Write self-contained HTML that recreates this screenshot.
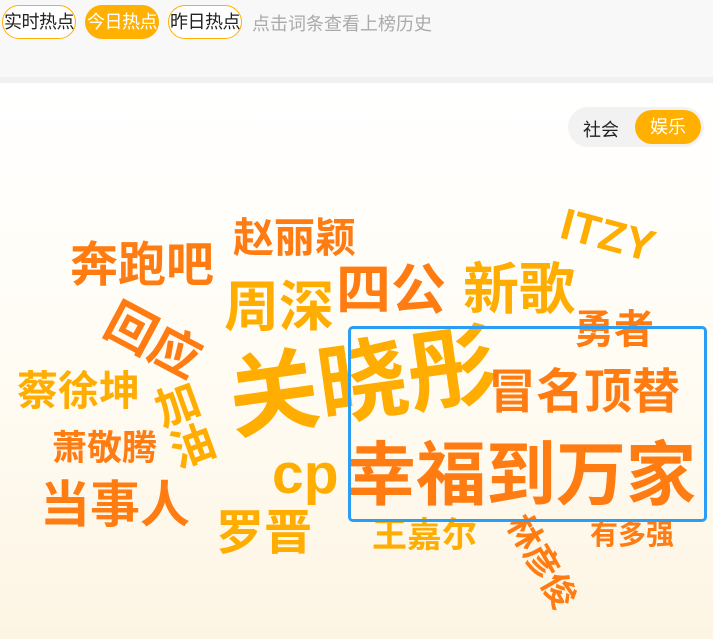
<!DOCTYPE html>
<html><head><meta charset="utf-8"><style>
*{margin:0;padding:0;box-sizing:border-box}
body{width:713px;height:639px;overflow:hidden;font-family:"Liberation Sans","Noto Sans CJK SC",sans-serif;background:#fff;position:relative}
.top{position:absolute;left:0;top:0;width:713px;height:77px;background:#f8f8f8}
.strip{position:absolute;left:0;top:77px;width:713px;height:6px;background:#f0f0f0}
.main{position:absolute;left:0;top:83px;width:713px;height:556px;background:linear-gradient(#fff 0%,#fffcf4 50%,#fdf5e4 100%)}
.btn{position:absolute;top:5px;height:34px;width:74px;border:1px solid #ffb000;border-radius:17px;font-size:18px;line-height:32px;text-align:center;color:#222;background:#fff;letter-spacing:-0.5px}
.btn.on{background:#ffb000;color:#fff}
.hint{position:absolute;left:252px;top:10px;font-size:18px;color:#aaa}
.tog{position:absolute;left:568px;top:107px;width:136px;height:40px;border-radius:20px;background:#f2f2f2}
.w{position:absolute;font-weight:bold;white-space:nowrap;line-height:1}
.o{color:#ff7c12}.y{color:#ffad00}
.box{position:absolute;left:348px;top:326px;width:359px;height:196px;border:3px solid #2a9df4;border-radius:5px}
</style></head><body>
<div class="top"></div><div class="strip"></div><div class="main"></div>
<div class="btn" style="left:2px">实时热点</div>
<div class="btn on" style="left:85px">今日热点</div>
<div class="btn" style="left:168px">昨日热点</div>
<div class="hint">点击词条查看上榜历史</div>
<div class="tog"><span style="position:absolute;left:15px;top:9px;font-size:18px;color:#222">社会</span><span style="position:absolute;left:67px;top:3px;width:66px;height:34px;border-radius:17px;background:#ffb000;color:#fff;font-size:18px;line-height:34px;text-align:center">娱乐</span></div>
<div class="w o" style="left:70px;top:242px;font-size:48px">奔跑吧</div>
<div class="w o" style="left:233px;top:218px;font-size:41px">赵丽颖</div>
<div class="w y" style="left:560px;top:214px;font-size:44px;transform:rotate(15deg)">ITZY</div>
<div class="w y" style="left:224px;top:280px;font-size:55px">周深</div>
<div class="w o" style="left:336px;top:263px;font-size:55px">四公</div>
<div class="w y" style="left:463px;top:262px;font-size:56px">新歌</div>
<div class="w o" style="left:574px;top:310px;font-size:40px">勇者</div>
<div class="w o" style="left:103px;top:316px;font-size:50px;transform:rotate(28deg)">回应</div>
<div class="w y" style="left:17px;top:371px;font-size:41px">蔡徐坤</div>
<div class="w y" style="left:158px;top:382px;font-size:44px;writing-mode:vertical-rl;transform:rotate(-20deg)">加油</div>
<div class="w y" style="left:228px;top:338px;font-size:90px;transform:rotate(-8deg)">关晓彤</div>
<div class="w o" style="left:488px;top:369px;font-size:48px">冒名顶替</div>
<div class="w o" style="left:52px;top:431px;font-size:35px">萧敬腾</div>
<div class="w y" style="left:272px;top:446px;font-size:57px">cp</div>
<div class="w o" style="left:346px;top:440px;font-size:70px">幸福到万家</div>
<div class="w o" style="left:40px;top:480px;font-size:50px">当事人</div>
<div class="w y" style="left:216px;top:510px;font-size:48px">罗晋</div>
<div class="w y" style="left:372px;top:518px;font-size:35px">王嘉尔</div>
<div class="w o" style="left:490px;top:545px;font-size:34px;transform:rotate(60deg)">林彦俊</div>
<div class="w o" style="left:590px;top:521px;font-size:28px">有多强</div>
<div class="box"></div>
</body></html>
